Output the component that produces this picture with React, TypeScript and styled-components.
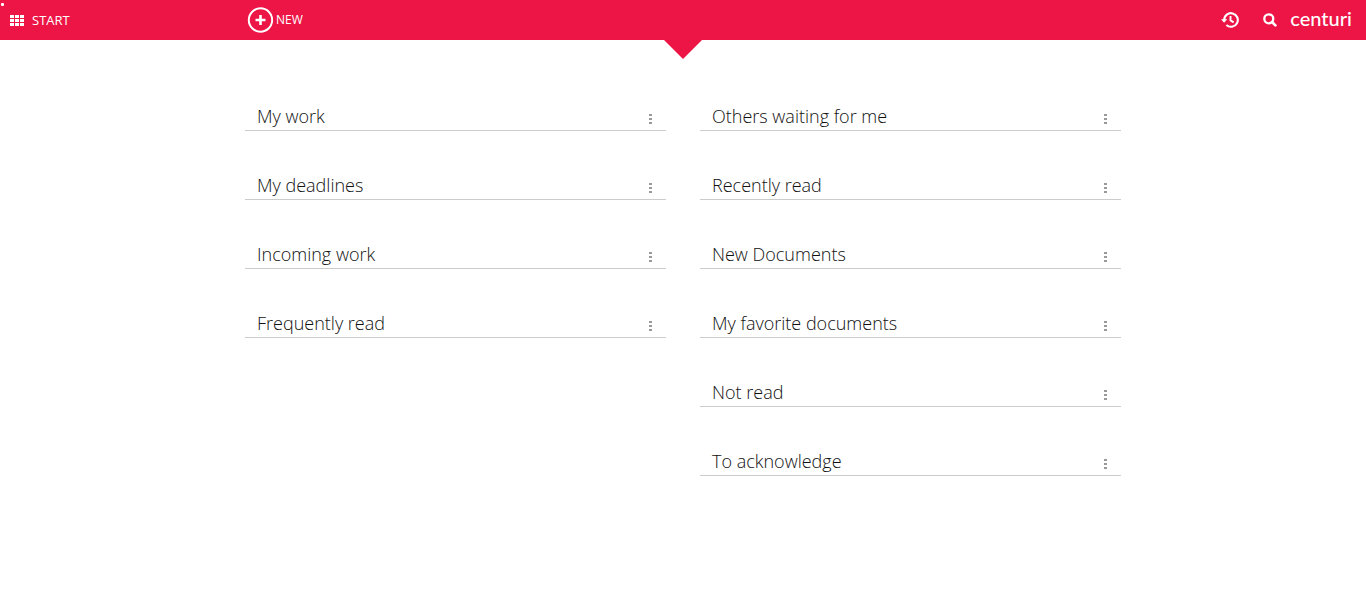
import React from "react";
import styled, { createGlobalStyle } from "styled-components";

const RED = "#ed1446";

const GlobalStyle = createGlobalStyle`
  * { box-sizing: border-box; }
  body {
    margin: 0;
    background: #fff;
    color: #111;
    font-family: "Open Sans", "Noto Sans", sans-serif;
  }
  button { font: inherit; color: inherit; background: none; border: 0; padding: 0; cursor: pointer; }
  svg { display: block; }
`;

const Header = styled.header`
  position: relative;
  display: grid;
  grid-template-columns: 1fr minmax(0, 876px) 1fr;
  align-items: center;
  height: 40px;
  background: ${RED};
  color: #fff;
`;

const Pointer = styled.span`
  position: absolute;
  top: 100%;
  left: 50%;
  margin-left: -19px;
  border: 19px solid transparent;
  border-top-color: ${RED};
  border-bottom: 0;
`;

const Marker = styled.span`
  position: absolute;
  top: 3px;
  left: 1px;
  width: 3px;
  height: 3px;
  border-radius: 1px;
  background: #fff;
`;

const StartButton = styled.button`
  display: flex;
  align-items: center;
  gap: 8px;
  padding-left: 10px;
  font-size: 13px;
  line-height: 18px;
`;

const NewButton = styled.button`
  display: flex;
  align-items: center;
  justify-self: start;
  gap: 3px;
  padding-left: 2px;
  font-size: 12px;
  font-weight: 500;
  line-height: 16px;
`;

const Tools = styled.div`
  display: flex;
  align-items: center;
  justify-content: flex-end;
  padding-right: 14px;
`;

const ToolButton = styled.button`
  width: 40px;
  height: 40px;
  display: grid;
  place-items: center;
`;

const Logo = styled.a`
  color: inherit;
  text-decoration: none;
  font-family: Lato, sans-serif;
  font-size: 20px;
  font-weight: 500;
  line-height: 24px;
  padding-bottom: 4px;
`;

const Board = styled.main`
  display: grid;
  grid-template-columns: 1fr 1fr;
  gap: 34px;
  max-width: 876px;
  margin: 0 auto;
  padding-top: 62px;
`;

const Column = styled.div`
  display: flex;
  flex-direction: column;
  gap: 40px;
`;

const Panel = styled.section`
  display: flex;
  align-items: center;
  justify-content: space-between;
  height: 29px;
  padding: 0 12px;
  border-bottom: 1px solid #ccc;
`;

const PanelTitle = styled.h2`
  margin: 0;
  font-size: 18px;
  font-weight: 300;
  line-height: 28px;
`;

const MenuButton = styled.button`
  display: grid;
  place-items: center;
  width: 7px;
  height: 28px;
  padding-top: 5px;
`;

const GridIcon = () => (
  <svg width="14" height="11" viewBox="0 0 14 11" fill="#fff" aria-hidden="true">
    {[0, 4, 8].map((y) => [0, 5, 10].map((x) => <rect key={`${x}-${y}`} x={x} y={y} width="4" height="3" />))}
  </svg>
);

const PlusIcon = () => (
  <svg width="26" height="26" viewBox="0 0 26 26" fill="none" stroke="#fff" aria-hidden="true">
    <circle cx="13.5" cy="13" r="11.7" strokeWidth="2" />
    <path d="M13.5 8v10M8.5 13h10" strokeWidth="2.6" />
  </svg>
);

const HistoryIcon = () => (
  <svg width="18" height="16" viewBox="0 0 18 16" fill="none" stroke="#fff" strokeWidth="2.1" aria-hidden="true">
    <path d="M3.2 8A6.8 6.8 0 1 1 5.4 13" />
    <path d="M0 7.2h6.2L3.1 10.8z" fill="#fff" stroke="none" />
    <path d="M9.5 4v4.4l3.2 2" strokeWidth="1.9" />
  </svg>
);

const SearchIcon = () => (
  <svg width="14" height="14" viewBox="0 0 14 14" fill="none" stroke="#fff" strokeWidth="2.3" aria-hidden="true">
    <circle cx="5.8" cy="5.8" r="4.5" />
    <path d="M9 9l3.4 3.4" strokeWidth="2.6" strokeLinecap="round" />
  </svg>
);

const DotsIcon = () => (
  <svg width="3" height="10" viewBox="0 0 3 10" fill="#999" aria-hidden="true">
    <rect width="3" height="2" />
    <rect y="4" width="3" height="2" />
    <rect y="8" width="3" height="2" />
  </svg>
);

const columns = [
  ["My work", "My deadlines", "Incoming work", "Frequently read"],
  ["Others waiting for me", "Recently read", "New Documents", "My favorite documents", "Not read", "To acknowledge"],
];

export default function App() {
  return (
    <>
      <GlobalStyle />
      <Header>
        <Marker />
        <StartButton type="button"><GridIcon />START</StartButton>
        <NewButton type="button"><PlusIcon />NEW</NewButton>
        <Tools>
          <ToolButton type="button" aria-label="History"><HistoryIcon /></ToolButton>
          <ToolButton type="button" aria-label="Search"><SearchIcon /></ToolButton>
          <Logo href="#">centuri</Logo>
        </Tools>
        <Pointer />
      </Header>
      <Board>
        {columns.map((titles, index) => (
          <Column key={index}>
            {titles.map((title) => (
              <Panel key={title}>
                <PanelTitle>{title}</PanelTitle>
                <MenuButton type="button" aria-label={`${title} options`}><DotsIcon /></MenuButton>
              </Panel>
            ))}
          </Column>
        ))}
      </Board>
    </>
  );
}
